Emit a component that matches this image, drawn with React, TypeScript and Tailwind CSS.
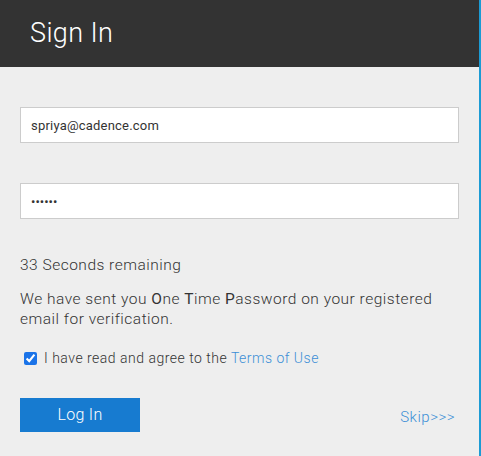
import { useState } from "react";

export default function App() {
  const [agree, setAgree] = useState(true);

  return (
    <div className="flex h-[456px] w-[481px] font-['Roboto',sans-serif]">
      <div className="flex-1 bg-[#eeeeee]">
        <div className="h-[67px] bg-[#333333] flex items-center pl-[30px]">
          <h1 className="text-[27px] font-light text-white tracking-[0.4px]">Sign In</h1>
        </div>

        <div className="px-5 pt-10">
          <input
            type="text"
            defaultValue="spriya@cadence.com"
            className="w-full h-[36px] border border-[#cccccc] bg-white px-[10px] text-[13px] tracking-[0.2px] text-[#333] outline-none"
          />
          <input
            type="password"
            defaultValue="secret"
            className="mt-10 w-full h-[36px] border border-[#cccccc] bg-white px-[10px] text-[13px] text-[#333] outline-none"
          />

          <p className="mt-[35px] text-[15.5px] tracking-[0.5px] font-light text-[#333]">33 Seconds remaining</p>
          <p className="mt-[12px] max-w-[430px] text-[15.5px] leading-[20px] tracking-[0.5px] font-light text-[#333]">
            We have sent you <span className="font-normal">O</span>ne <span className="font-normal">T</span>ime{" "}
            <span className="font-normal">P</span>assword on your registered email for verification.
          </p>

          <label className="mt-[19px] flex items-center gap-[7px] pl-[4px] text-[14px] tracking-[0.5px] font-light text-[#333]">
            <input
              type="checkbox"
              checked={agree}
              onChange={(e) => setAgree(e.target.checked)}
              className="h-[13px] w-[13px] accent-[#1a73e8]"
            />
            <span>
              I have read and agree to the <a className="text-[#3c8fd6]">Terms of Use</a>
            </span>
          </label>

          <div className="mt-[29px] flex items-center justify-between">
            <button className="h-[34px] w-[120px] bg-[#177bd0] text-[16px] font-light tracking-[0.3px] text-white">Log In</button>
            <a className="mr-[4px] mt-[3px] text-[15px] tracking-[0.5px] font-light text-[#3c8fd6]">Skip&gt;&gt;&gt;</a>
          </div>
        </div>
      </div>
      <div className="w-[2px] bg-[#1c9bd4]" />
    </div>
  );
}
